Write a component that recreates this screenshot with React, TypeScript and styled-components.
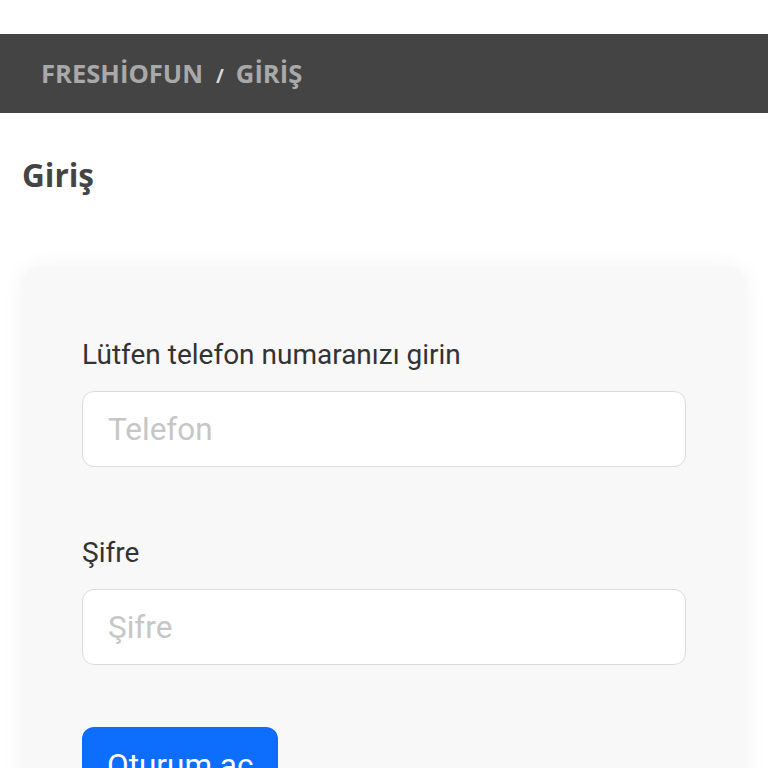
import React from 'react'
import styled, {createGlobalStyle} from 'styled-components'

const colors = {
  bar: '#444444',
  barText: '#a9a9a9',
  title: '#444444',
  card: '#f8f8f8',
  label: '#333333',
  border: '#dcdcdc',
  placeholder: '#c6c6c6',
  blue: '#0d6efd',
}

const GlobalStyle = createGlobalStyle`
  html, body {
    margin: 0;
    padding: 0;
    background: #fff;
    font-family: Roboto, "Liberation Sans", sans-serif;
  }
  * {
    box-sizing: border-box;
  }
`

const Page = styled.div`
  padding-top: 34px;
  overflow: hidden;
`

const TopBar = styled.div`
  height: 79px;
  background: ${colors.bar};
  padding-left: 41px;
  display: flex;
  align-items: baseline;
  font-family: "Open Sans", "Liberation Sans", sans-serif;
  font-weight: 700;
  line-height: 79px;
`

const Crumb = styled.span`
  font-size: 25.6px;
  color: ${colors.barText};
`

const CrumbSep = styled.span`
  font-size: 19px;
  color: #d8d8d8;
  margin: 0 12px 0 13px;
`

const Content = styled.div`
  padding: 0 22px;
`

const Title = styled.h1`
  margin: 41px 0 71px;
  font-family: "Open Sans", "Liberation Sans", sans-serif;
  font-weight: 700;
  font-size: 31.5px;
  line-height: 41px;
  color: ${colors.title};
`

const Card = styled.div`
  background: ${colors.card};
  border-radius: 20px;
  box-shadow: 0 0 22px rgba(0, 0, 0, 0.05);
  padding: 70px 60px 80px;
`

const Field = styled.div<{ last?: boolean }>`
  margin-bottom: ${({last}) => last ? '62px' : '67px'};
`

const Label = styled.label`
  display: block;
  font-size: 28px;
  line-height: 37px;
  color: ${colors.label};
  margin-bottom: 18px;
`

const Input = styled.input`
  display: block;
  width: 100%;
  height: 76px;
  padding: 0 25px;
  border: 1px solid ${colors.border};
  border-radius: 12px;
  background: #fff;
  font-family: Roboto, "Liberation Sans", sans-serif;
  font-size: 31.5px;
  color: #333;
  outline: none;

  &::placeholder {
    color: ${colors.placeholder};
  }
`

const SubmitButton = styled.button`
  height: 76px;
  padding: 0 25px;
  border: none;
  border-radius: 12px;
  background: ${colors.blue};
  color: #fff;
  font-family: Roboto, "Liberation Sans", sans-serif;
  font-size: 31.5px;
  cursor: pointer;
`

function App() {
    return (
        <Page>
            <GlobalStyle/>
            <TopBar>
                <Crumb>FRESHİOFUN</Crumb>
                <CrumbSep>/</CrumbSep>
                <Crumb>GİRİŞ</Crumb>
            </TopBar>
            <Content>
                <Title>Giriş</Title>
                <Card>
                    <Field>
                        <Label>Lütfen telefon numaranızı girin</Label>
                        <Input type="tel" placeholder="Telefon"/>
                    </Field>
                    <Field last>
                        <Label>Şifre</Label>
                        <Input type="password" placeholder="Şifre"/>
                    </Field>
                    <SubmitButton>Oturum aç</SubmitButton>
                </Card>
            </Content>
        </Page>
    );
}

export default App;
